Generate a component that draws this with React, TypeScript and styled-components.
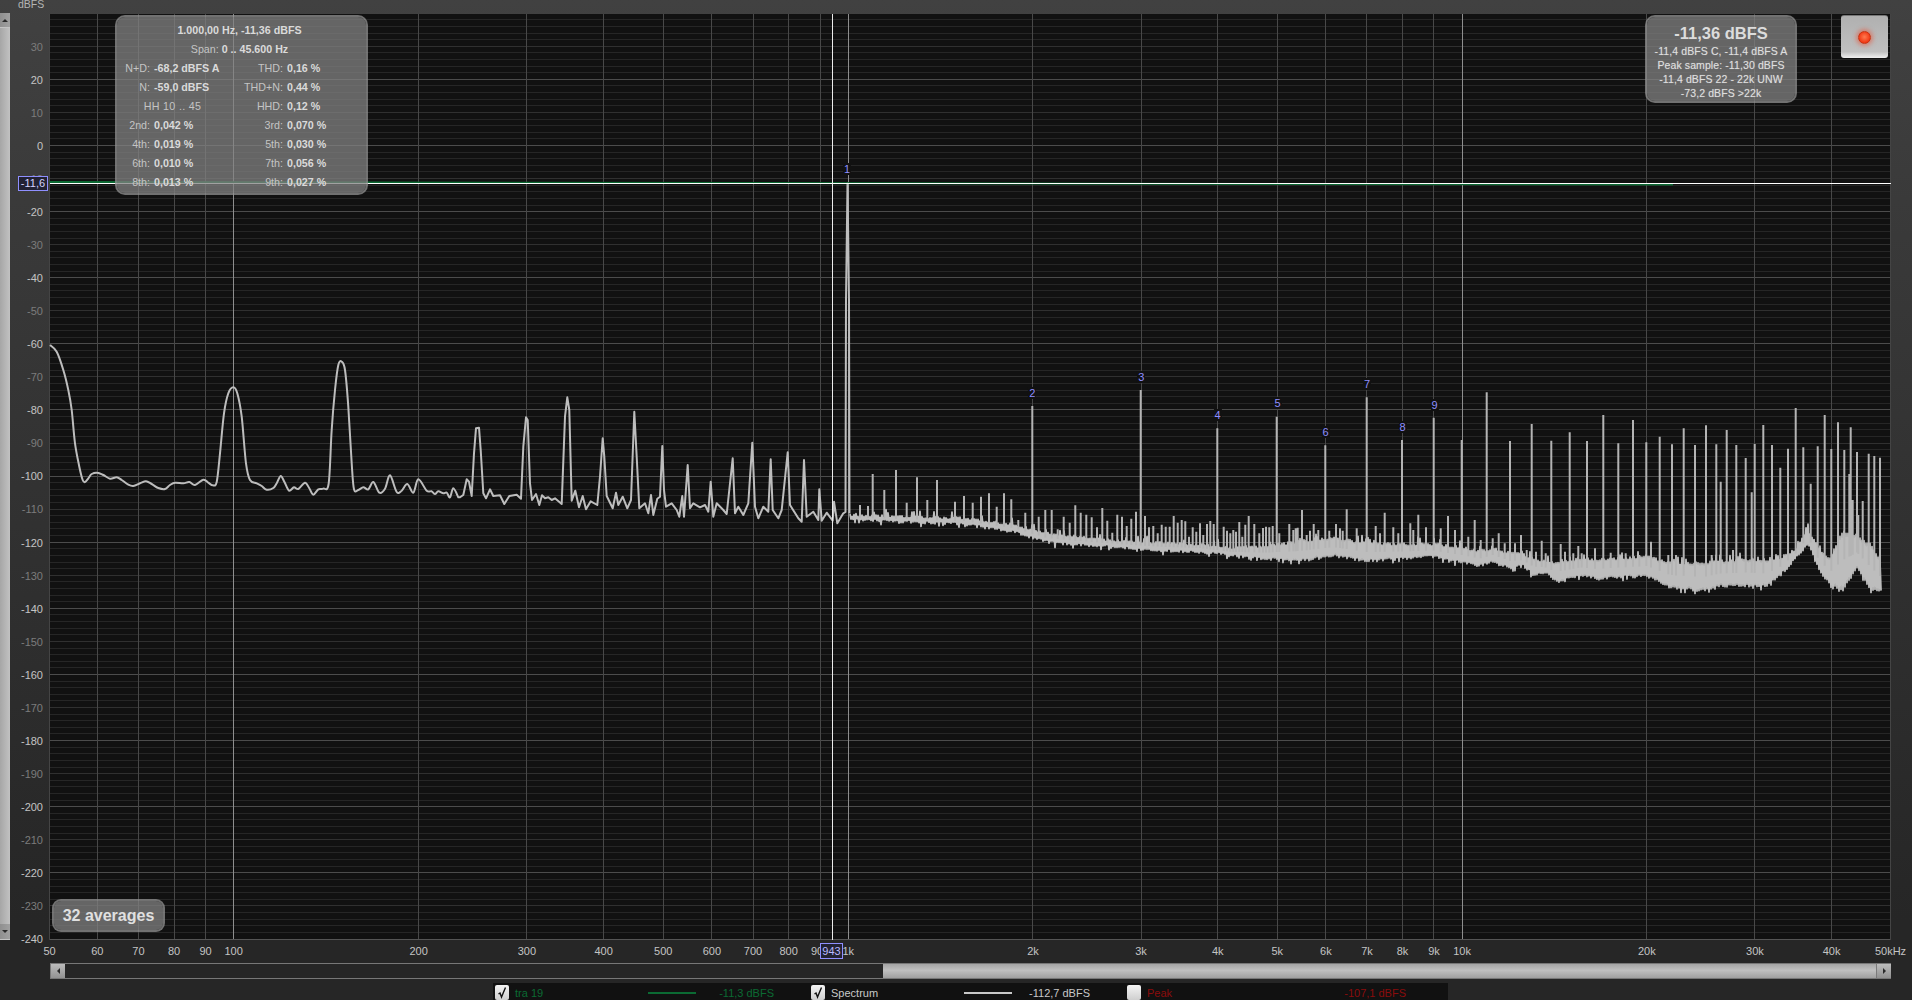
import React from 'react';
import styled, { createGlobalStyle } from 'styled-components';

const GlobalStyle = createGlobalStyle`
    html, body {
        margin: 0;
        padding: 0;
        background: #262626;
    }
    * {
        box-sizing: border-box;
    }
`;

const font = `"Liberation Sans", Arial, sans-serif`;

const PLOT_LEFT = 49;
const PLOT_TOP = 14;
const PLOT_WIDTH = 1842;
const PLOT_HEIGHT = 926;

const yOf = (db: number) => 145.5 - 3.306 * db;
const xOf = (hz: number) => 848.2 + (hz < 1000 ? 185 : 184.78) * Math.log2(hz / 1000);
const crisp = (v: number) => Math.floor(v) + 0.5;

/* traced from the reference, "x,y" in the units of each crop */
const parse = (s: string, ox: number, oy: number) =>
    s.trim().split(/\s+/).map((p) => {
        const [a, b] = p.split(',').map(Number);
        return [ox + a / 3, oy + b / 3];
    });

const lowA = parse(`30,45 50,65 70,120 85,180 95,240 105,340 118,410 128,450 135,456 145,445 155,432 172,428 190,435 210,446 230,442 245,450 265,464 280,468 300,460 318,454 335,462 355,474 375,477 390,465 405,458 430,460 448,456 465,465 490,449 505,458 518,466 530,456 540,370 552,250 565,190 580,172 592,190 605,260 618,400 630,450 650,460 665,468 680,479 700,474 710,460 722,438 733,455 747,482 762,472 775,477 795,458 808,475 820,494 835,478 850,476 866,460 875,300 885,180 895,105 905,95 915,120 925,230 935,400 942,478 955,480 970,472 985,478 1000,456 1018,488 1035,476 1050,436 1070,486 1085,482 1102,462 1120,488 1135,448 1160,482 1175,484 1185,492 1195,484 1210,490 1220,488 1230,502 1240,475 1255,502`, 40, 330);

const lowB = parse(`0,322 10,315 20,268 27,275 35,318 42,190 48,115 57,113 62,180 70,310 78,325 90,298 100,318 120,316 133,342 148,318 170,314 183,326 190,170 198,82 203,90 210,280 216,330 228,312 238,345 246,316 255,325 265,322 275,330 285,325 305,342 315,80 322,22 328,60 335,332 346,302 357,352 368,318 378,358 392,334 412,345 420,260 428,145 433,200 440,318 458,355 468,308 475,345 488,320 502,355 513,330 523,65 530,200 538,355 555,340 565,370 573,315 580,375 592,326 600,320 607,168 612,300 618,350 635,340 650,360 658,380 667,318 672,380 683,225 690,355 700,340 720,352 735,345 745,365 752,275 760,380 770,340 790,360 800,372 818,205 825,370 835,350 850,375 865,340 877,158 885,350 895,385 910,350 925,365 932,208 938,360 955,385 965,360 983,187 990,345 1015,385 1025,395 1032,210 1040,380 1060,365 1075,390 1078,298 1085,392 1100,368 1118,392 1122,335 1132,400 1150,370`, 460, 390);

const mainPeak = [[845.5, 512], [846, 300], [847.5, 183], [849, 300], [849.5, 513]];

const spikes = [
    ...parse(`240,1065 264,1068 278,972 313,1020 348,960 380,1058 411,982 442,1050 471,990 525,1055 552,1038 578,1058 603,1040 627,1030 650,1070`, 780, 150),
    ...parse(`12,400 34,418 55,480 76,458 97,138 116,470 136,450 155,450 173,508 191,470 209,488 226,436 242,458 259,464 275,472 291,502 307,444 322,482 337,518 352,464 366,470 380,498 394,476 408,455 422,90 435,468 447,502 460,498 473,520 485,494 497,500 509,500 521,468 533,488 545,480 556,484 567,530 578,502 589,515 600,490 610,525 621,492 631,483 641,492 652,205 671,500 681,512 691,520 700,510 708,515 718,486 727,530 736,494 746,468 763,492 778,520 789,504 798,500 808,502 818,498 830,170 838,520 868,492 880,510 887,505 893,503 906,450 920,525 930,512 941,492 955,510 976,256 988,512 1008,492 1020,505 1028,512 1040,448 1070,505 1100,112 1127,498 1140,520 1154,458 1180,502 1195,520 1206,240 1231,490 1240,510 1255,464 1278,502 1301,173 1322,505 1344,468 1365,510 1385,240 1405,530 1424,480 1442,540`, 1000, 360),
    ...parse(`20,67 38,505 56,490 74,520 90,213 105,520 123,495 140,540 155,162 168,545 185,512 197,550 214,212 242,522 255,545 269,187 280,550 295,528 305,550 321,213 345,535 370,135 392,548 415,220 437,550 459,150 478,555 499,217 513,515 539,200 565,555 576,223 588,555 611,175 645,225 678,166 695,555 709,223 722,335 740,180 759,540 769,225 797,264 815,367 824,222 850,165 876,225 901,293 924,236 947,114 970,232 992,341 1013,229 1034,135 1054,237 1074,157 1093,240 1108,312 1112,172 1118,390 1131,246 1135,435 1148,393 1166,251 1183,258 1200,263`, 1480, 370),
];

/* noise floor: x, upper edge, lower edge */
const band = [
    [850, 514, 521], [963, 517, 525], [1013, 523, 533], [1047, 533, 543], [1073, 535, 546],
    [1100, 538, 547], [1133, 540, 550], [1167, 542, 552], [1200, 543, 553], [1233, 547, 557],
    [1267, 545, 560], [1300, 540, 562], [1333, 537, 557], [1367, 542, 562], [1400, 543, 560],
    [1433, 543, 558], [1467, 547, 565], [1480, 550, 567], [1493, 547, 563], [1510, 552, 570],
    [1523, 553, 567], [1533, 558, 575], [1547, 560, 575], [1555, 562, 582], [1580, 558, 577],
    [1597, 558, 580], [1620, 557, 578], [1647, 555, 577], [1670, 562, 588], [1703, 562, 592],
    [1720, 560, 587], [1747, 558, 587], [1767, 560, 587], [1780, 557, 577], [1797, 547, 558],
    [1808, 528, 545], [1817, 547, 567], [1830, 557, 587], [1843, 530, 590], [1857, 535, 570],
    [1870, 543, 590], [1881, 562, 592],
];

const edgesAt = (x: number) => {
    for (let i = 1; i < band.length; i++) {
        if (x <= band[i][0]) {
            const [x0, t0, b0] = band[i - 1];
            const [x1, t1, b1] = band[i];
            const k = (x - x0) / (x1 - x0);
            return [t0 + (t1 - t0) * k, b0 + (b1 - b0) * k];
        }
    }
    return [band[band.length - 1][1], band[band.length - 1][2]];
};

const smooth = (pts: number[][]) => {
    let d = `M${pts[0][0]} ${pts[0][1]}`;
    for (let i = 0; i < pts.length - 1; i++) {
        const p0 = pts[Math.max(i - 1, 0)];
        const p1 = pts[i];
        const p2 = pts[i + 1];
        const p3 = pts[Math.min(i + 2, pts.length - 1)];
        d += `C${(p1[0] + (p2[0] - p0[0]) / 6).toFixed(1)} ${(p1[1] + (p2[1] - p0[1]) / 6).toFixed(1)} ${(p2[0] - (p3[0] - p1[0]) / 6).toFixed(1)} ${(p2[1] - (p3[1] - p1[1]) / 6).toFixed(1)} ${p2[0].toFixed(1)} ${p2[1].toFixed(1)}`;
    }
    return d;
};

const line = (pts: number[][]) => pts.map((p) => `L${p[0].toFixed(1)} ${p[1].toFixed(1)}`).join('');

const buildFloor = () => {
    let seed = 4711;
    const rnd = () => {
        seed = (seed * 16807) % 2147483647;
        return seed / 2147483647;
    };
    const pts: number[][] = [];
    let up = true;
    for (let x = 850; x <= 1881; x += 1) {
        const [t, b] = edgesAt(x);
        const r = rnd();
        const jag = rnd();
        const kick = jag > 0.85 ? 2 + (jag - 0.85) * 30 : 0;
        pts.push([x, up ? t + r * 3 - kick : b - r * 3 + kick * 0.6]);
        up = !up;
    }
    return `M${pts[0][0]} ${pts[0][1]}${line(pts)}`;
};

const buildSpikes = () =>
    spikes.map(([x, y]) => {
        const [t, b] = edgesAt(x);
        return `M${x.toFixed(1)} ${((t + b) / 2).toFixed(1)}V${y.toFixed(1)}`;
    }).join('');

const lowPath = `${smooth(lowA)}${line(lowB)}${line(mainPeak)}`;
const floorPath = buildFloor();
const spikePath = buildSpikes();

const majorFreqs = [100, 1000, 10000];
const freqs = [60, 70, 80, 90, 100, 200, 300, 400, 500, 600, 700, 800, 900, 1000, 2000, 3000, 4000, 5000, 6000, 7000, 8000, 9000, 10000, 20000, 30000, 40000];

const xLabels: [number, string][] = [
    [50, '50'], [60, '60'], [70, '70'], [80, '80'], [90, '90'], [100, '100'], [200, '200'], [300, '300'],
    [400, '400'], [500, '500'], [600, '600'], [700, '700'], [800, '800'], [900, '900'], [1000, '1k'],
    [2000, '2k'], [3000, '3k'], [4000, '4k'], [5000, '5k'], [6000, '6k'], [7000, '7k'], [8000, '8k'],
    [9000, '9k'], [10000, '10k'], [20000, '20k'], [30000, '30k'], [40000, '40k'], [50000, '50kHz'],
];

const peakMarks: [string, number, number][] = [
    ['1', 847, 169], ['2', 1032.3, 393], ['3', 1141.3, 377], ['4', 1217.5, 415], ['5', 1277.5, 403],
    ['6', 1325.5, 432], ['7', 1367, 384], ['8', 1402.5, 427], ['9', 1434.5, 405],
];

const dbTicks: number[] = [];
for (let db = 30; db >= -240; db -= 10) dbTicks.push(db);

const minorTicks: number[] = [];
for (let db = 38; db >= -238; db -= 2) minorTicks.push(db);

const Page = styled.div`
    width: 100vw;
    height: 100vh;
    overflow: hidden;
    display: flex;
    flex-direction: column;
    font-family: ${font};
    background: linear-gradient(#414141 0%, #3a3a3a 20%, #262626 92%);
`;

const TopBar = styled.div`
    flex: 0 0 14px;
    height: 14px;
    padding-left: 18px;
    overflow: hidden;
`;

const Unit = styled.div`
    font-size: 10.5px;
    line-height: 8px;
    color: #b4b4b4;
`;

const Middle = styled.div`
    flex: 0 0 ${PLOT_HEIGHT}px;
    display: flex;
`;

const VScroll = styled.div`
    flex: 0 0 10px;
    display: flex;
    flex-direction: column;
    margin-top: -1px;
`;

const VButton = styled.div<{ $height: number }>`
    flex: 0 0 ${(p) => p.$height}px;
    display: flex;
    align-items: center;
    justify-content: center;
    background: linear-gradient(90deg, #8f8f8f, #a0a0a0);
    border-bottom: 1px solid #c4c4c4;
`;

const VThumb = styled.div`
    flex: 1;
    background: linear-gradient(90deg, #a6a6a6, #c2c2c2);
`;

const Arrow = styled.div<{ $dir: 'up' | 'down' | 'left' | 'right' }>`
    width: 0;
    height: 0;
    border-style: solid;
    border-color: transparent;
    border-width: ${(p) => (p.$dir === 'up' || p.$dir === 'down' ? '3px 3.5px' : '3.5px 3px')};
    ${(p) => (p.$dir === 'up' ? 'border-bottom-color: #2a2a2a; margin-top: -3px;' : '')}
    ${(p) => (p.$dir === 'down' ? 'border-top-color: #2a2a2a; margin-top: 3px;' : '')}
    ${(p) => (p.$dir === 'left' ? 'border-right-color: #2a2a2a; margin-left: -3px;' : '')}
    ${(p) => (p.$dir === 'right' ? 'border-left-color: #2a2a2a; margin-left: 3px;' : '')}
`;

const YAxis = styled.div`
    flex: 0 0 ${PLOT_LEFT - 10}px;
    position: relative;
`;

const YLabel = styled.div<{ $bright: boolean }>`
    position: absolute;
    right: 6px;
    transform: translateY(-50%);
    font-size: 11px;
    line-height: 12px;
    color: ${(p) => (p.$bright ? '#c4c4c4' : '#7c7c7c')};
`;

const LevelTag = styled.div`
    position: absolute;
    left: 8px;
    top: 162px;
    width: 30px;
    height: 15px;
    border: 1px solid #8f8fff;
    background: #222233;
    color: #d4d4ff;
    font-size: 11px;
    line-height: 13px;
    text-align: center;
`;

const Plot = styled.div`
    flex: 0 0 ${PLOT_WIDTH}px;
    position: relative;
    background: #111111;
    overflow: hidden;
`;

const PlotSvg = styled.svg`
    display: block;
    width: 100%;
    height: 100%;
`;

const PeakMark = styled.div`
    position: absolute;
    transform: translate(-50%, -50%);
    font-size: 11px;
    line-height: 12px;
    padding: 0 1px;
    color: #8f8fff;
    background: #111111;
`;

const Glass = styled.div`
    position: absolute;
    background: rgba(130, 130, 130, 0.75);
    background-clip: padding-box;
    border: 2px solid rgba(146, 146, 146, 0.75);
    border-radius: 10px;
`;

const InfoBox = styled(Glass)`
    left: 66px;
    top: 1px;
    width: 253px;
    height: 180px;
    padding-top: 4px;
    display: grid;
    grid-template-columns: 33px 74px 59px 1fr;
    column-gap: 0;
    grid-auto-rows: 19px;
    font-size: 10.7px;
    line-height: 19px;
    color: #c4c4c4;
`;

const InfoTitle = styled.div`
    grid-column: 1 / -1;
    text-align: center;
    margin-right: 4px;
`;

const Strong = styled.span`
    font-weight: bold;
    color: #dadada;
`;

const Label = styled.div`
    text-align: right;
    white-space: nowrap;
    direction: rtl;
    unicode-bidi: plaintext;
`;

const Value = styled.div`
    padding-left: 4px;
    white-space: nowrap;
    font-weight: bold;
    color: #dadada;
`;

const HalfRow = styled.div`
    grid-column: 1 / span 2;
    text-align: center;
    padding-left: 4px;
    letter-spacing: 0.3px;
`;

const LevelBox = styled(Glass)`
    left: 1596px;
    top: 1px;
    width: 152px;
    height: 88px;
    text-align: center;
    padding-top: 7px;
    color: #dedede;
`;

const BigLevel = styled.div`
    font-size: 16.5px;
    line-height: 19px;
    font-weight: bold;
    color: #dcdcdc;
    margin-bottom: 1px;
`;

const SmallLevel = styled.div`
    font-size: 10.5px;
    line-height: 14px;
    letter-spacing: 0.1px;
    white-space: nowrap;
    text-shadow: 0 0 1px rgba(220, 220, 220, 0.5);
`;

const RecordButton = styled.div`
    position: absolute;
    left: 1792px;
    top: 1px;
    width: 47px;
    height: 43px;
    border-radius: 3px;
    background: linear-gradient(#b0b0b0, #c0c0c0 85%, #f0f0f0);
    border-top: 1px solid #777;
    display: flex;
    align-items: center;
    justify-content: center;
`;

const RecordDot = styled.div`
    width: 13px;
    height: 13px;
    border-radius: 50%;
    border: 1px solid #c8300f;
    background: radial-gradient(circle at 50% 45%, #ff7a50, #f0330f 75%);
    box-shadow: 0 0 4px 2px rgba(240, 70, 40, 0.5);
`;

const AveragesBadge = styled(Glass)`
    left: 3px;
    top: 885px;
    width: 113px;
    height: 33px;
    border-radius: 9px;
    font-size: 16px;
    line-height: 29px;
    font-weight: bold;
    text-align: center;
    color: #e0e0e0;
`;

const XAxis = styled.div`
    flex: 0 0 23px;
    position: relative;
    margin-left: ${PLOT_LEFT}px;
    width: ${PLOT_WIDTH}px;
`;

const XLabel = styled.div`
    position: absolute;
    top: 5px;
    transform: translateX(-50%);
    font-size: 11px;
    line-height: 13px;
    color: #c4c4c4;
    white-space: nowrap;
`;

const CursorTag = styled.div`
    position: absolute;
    left: 771px;
    top: 3px;
    width: 23px;
    height: 16px;
    border: 1px solid #8f8fff;
    background: #222233;
    color: #b8b8ff;
    font-size: 11px;
    line-height: 14px;
    text-align: center;
`;

const HScroll = styled.div`
    flex: 0 0 16px;
    display: flex;
    margin-left: ${PLOT_LEFT + 1}px;
    width: ${PLOT_WIDTH - 1}px;
    border-top: 1px solid #777777;
    border-bottom: 1px solid #777777;
`;

const HButton = styled.div`
    flex: 0 0 15px;
    display: flex;
    align-items: center;
    justify-content: center;
    background: linear-gradient(#bcbcbc, #929292);
    border-left: 1px solid #7a7a7a;
`;

const HGap = styled.div`
    flex: 1;
`;

const HThumb = styled.div`
    flex: 0 0 993px;
    background: linear-gradient(#a4a4a4, #c0c0c0 45%, #a0a0a0);
`;

const Legend = styled.div`
    margin: 3.5px 0 0 493px;
    width: 955px;
    height: 30px;
    padding: 2px 2px;
    background: #111111;
    display: flex;
    gap: 37px;
`;

const LegendItem = styled.div`
    flex: 0 0 279px;
    height: 16px;
    display: grid;
    grid-template-columns: 14px 6px 133px 48px 1fr;
    align-items: center;
    font-size: 11px;
    line-height: 14px;
`;

const Check = styled.div`
    grid-column: 1;
    width: 14px;
    height: 15px;
    border-radius: 2px;
    background: linear-gradient(#f4f4f4, #cfcfcf);
    display: flex;
    align-items: center;
    justify-content: center;
`;

const LegendName = styled.div<{ $color: string }>`
    grid-column: 3;
    color: ${(p) => p.$color};
`;

const LegendLine = styled.div<{ $color: string }>`
    grid-column: 4;
    height: 2px;
    background: ${(p) => p.$color};
`;

const LegendValue = styled.div<{ $color: string }>`
    grid-column: 5;
    text-align: right;
    white-space: nowrap;
    color: ${(p) => p.$color};
`;

const CheckMark = () => (
    <svg width="10" height="12" viewBox="0 0 10 12">
        <path d="M1.5 7 L3 6 L4.5 10 L8.5 0.5" fill="none" stroke="#111" strokeWidth="1.4" />
    </svg>
);

const infoRows: [string, string, string, string][] = [
    ['N+D:', '-68,2 dBFS A', 'THD:', '0,16 %'],
    ['N:', '-59,0 dBFS', 'THD+N:', '0,44 %'],
    ['', 'HH 10 .. 45', 'HHD:', '0,12 %'],
    ['2nd:', '0,042 %', '3rd:', '0,070 %'],
    ['4th:', '0,019 %', '5th:', '0,030 %'],
    ['6th:', '0,010 %', '7th:', '0,056 %'],
    ['8th:', '0,013 %', '9th:', '0,027 %'],
];

const legendItems = [
    { name: 'tra 19', value: '-11,3 dBFS', color: '#0b6a33', line: '#0b6a33', checked: true },
    { name: 'Spectrum', value: '-112,7 dBFS', color: '#c8c8c8', line: '#c8c8c8', checked: true },
    { name: 'Peak', value: '-107,1 dBFS', color: '#8a0c0c', line: 'transparent', checked: false },
];

const Grid = () => (
    <g shapeRendering="crispEdges" strokeWidth="1">
        {minorTicks.map((db) => (
            <line
                key={db}
                x1={PLOT_LEFT}
                x2={PLOT_LEFT + PLOT_WIDTH}
                y1={crisp(yOf(db))}
                y2={crisp(yOf(db))}
                stroke={db % 20 === 0 ? '#4c4c4c' : db % 10 === 0 ? '#303030' : '#262626'}
            />
        ))}
        {freqs.map((f) => (
            <line
                key={f}
                x1={crisp(xOf(f))}
                x2={crisp(xOf(f))}
                y1={PLOT_TOP}
                y2={PLOT_TOP + PLOT_HEIGHT}
                stroke={majorFreqs.includes(f) ? '#8e8e8e' : '#484848'}
            />
        ))}
        <line x1={PLOT_LEFT} x2={PLOT_LEFT + PLOT_WIDTH} y1="939.5" y2="939.5" stroke="#555" />
        <line x1={PLOT_LEFT + 0.5} x2={PLOT_LEFT + 0.5} y1={PLOT_TOP} y2="940" stroke="#444" />
        <line x1="1890.5" x2="1890.5" y1={PLOT_TOP} y2="940" stroke="#444" />
    </g>
);

const Trace = () => (
    <g fill="none" stroke="#bdbdbd" strokeLinejoin="round">
        <path d={lowPath} strokeWidth="2" />
        <path d={floorPath} strokeWidth="1.8" />
        <path d={spikePath} strokeWidth="2" stroke="#b4b4b4" />
    </g>
);

const Spectrum = () => (
    <PlotSvg viewBox={`${PLOT_LEFT} ${PLOT_TOP} ${PLOT_WIDTH} ${PLOT_HEIGHT}`} preserveAspectRatio="none">
        <Grid />
        <Trace />
        <line x1="49.5" y1="181.9" x2="1673" y2="184.6" stroke="#0b6a33" strokeWidth="2" />
        <g shapeRendering="crispEdges">
            <line x1="49.5" y1="183.5" x2="1891" y2="183.5" stroke="#ffffff" />
            <line x1="832.5" y1={PLOT_TOP} x2="832.5" y2="940" stroke="#ececec" />
        </g>
    </PlotSvg>
);

const labelLeft = (hz: number) => Math.min(Math.max(xOf(hz), 49.5), 1890.5) - PLOT_LEFT;

const App = () => (
    <>
        <GlobalStyle />
        <Page>
            <TopBar>
                <Unit>dBFS</Unit>
            </TopBar>

            <Middle>
                <VScroll>
                    <VButton $height={15}>
                        <Arrow $dir="up" />
                    </VButton>
                    <VThumb />
                    <VButton $height={16}>
                        <Arrow $dir="down" />
                    </VButton>
                </VScroll>

                <YAxis>
                    {dbTicks.map((db) => (
                        <YLabel key={db} $bright={db % 20 === 0} style={{ top: yOf(db) - PLOT_TOP + 0.3 }}>
                            {db}
                        </YLabel>
                    ))}
                    <LevelTag>-11,6</LevelTag>
                </YAxis>

                <Plot>
                    <Spectrum />

                    {peakMarks.map(([n, x, y]) => (
                        <PeakMark key={n} style={{ left: x - PLOT_LEFT, top: y - PLOT_TOP }}>
                            {n}
                        </PeakMark>
                    ))}

                    <InfoBox>
                        <InfoTitle><Strong>1.000,00 Hz, -11,36 dBFS</Strong></InfoTitle>
                        <InfoTitle>Span: <Strong>0 .. 45.600 Hz</Strong></InfoTitle>
                        {infoRows.map(([a, b, c, d]) => (
                            <React.Fragment key={c}>
                                {a ? (
                                    <>
                                        <Label>{a}</Label>
                                        <Value>{b}</Value>
                                    </>
                                ) : (
                                    <HalfRow>{b}</HalfRow>
                                )}
                                <Label>{c}</Label>
                                <Value>{d}</Value>
                            </React.Fragment>
                        ))}
                    </InfoBox>

                    <LevelBox>
                        <BigLevel>-11,36 dBFS</BigLevel>
                        <SmallLevel>-11,4 dBFS C, -11,4 dBFS A</SmallLevel>
                        <SmallLevel>Peak sample: -11,30 dBFS</SmallLevel>
                        <SmallLevel>-11,4 dBFS 22 - 22k UNW</SmallLevel>
                        <SmallLevel>-73,2 dBFS &gt;22k</SmallLevel>
                    </LevelBox>

                    <RecordButton>
                        <RecordDot />
                    </RecordButton>

                    <AveragesBadge>32 averages</AveragesBadge>
                </Plot>
            </Middle>

            <XAxis>
                {xLabels.map(([hz, text]) => (
                    <XLabel key={hz} style={{ left: labelLeft(hz) }}>
                        {text}
                    </XLabel>
                ))}
                <CursorTag>943</CursorTag>
            </XAxis>

            <HScroll>
                <HButton>
                    <Arrow $dir="left" />
                </HButton>
                <HGap />
                <HThumb />
                <HButton>
                    <Arrow $dir="right" />
                </HButton>
            </HScroll>

            <Legend>
                {legendItems.map((item) => (
                    <LegendItem key={item.name}>
                        <Check>{item.checked && <CheckMark />}</Check>
                        <LegendName $color={item.color}>{item.name}</LegendName>
                        <LegendLine $color={item.line} />
                        <LegendValue $color={item.color}>{item.value}</LegendValue>
                    </LegendItem>
                ))}
            </Legend>
        </Page>
    </>
);

export default App;
